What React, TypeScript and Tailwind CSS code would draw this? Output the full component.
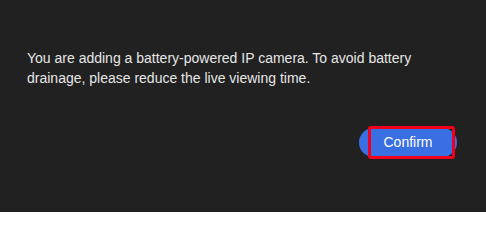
import React from "react";

export default function App() {
  return (
    <div
      className="w-[486px] h-[212px] bg-[#212121] overflow-hidden"
      style={{ fontFamily: '"Liberation Sans", Arial, sans-serif' }}
    >
      <div className="pt-[48px] pl-[27px] pr-[27px]">
        <p className="text-[14px] leading-[20px] text-[#e6e6e6]">
          You are adding a battery-powered IP camera. To avoid battery drainage, please reduce the live viewing time.
        </p>
      </div>
      <div className="flex justify-end pr-[29px] mt-[40px]">
        <div className="relative">
          <button className="w-[98px] h-[29px] rounded-full bg-[#3a6fe4] text-white text-[14px] leading-[29px] text-center">
            Confirm
          </button>
          <div className="absolute left-[9px] top-[-2px] w-[87px] h-[33px] border-[3px] border-[#f0001c] rounded-[3px] pointer-events-none" />
        </div>
      </div>
    </div>
  );
}
